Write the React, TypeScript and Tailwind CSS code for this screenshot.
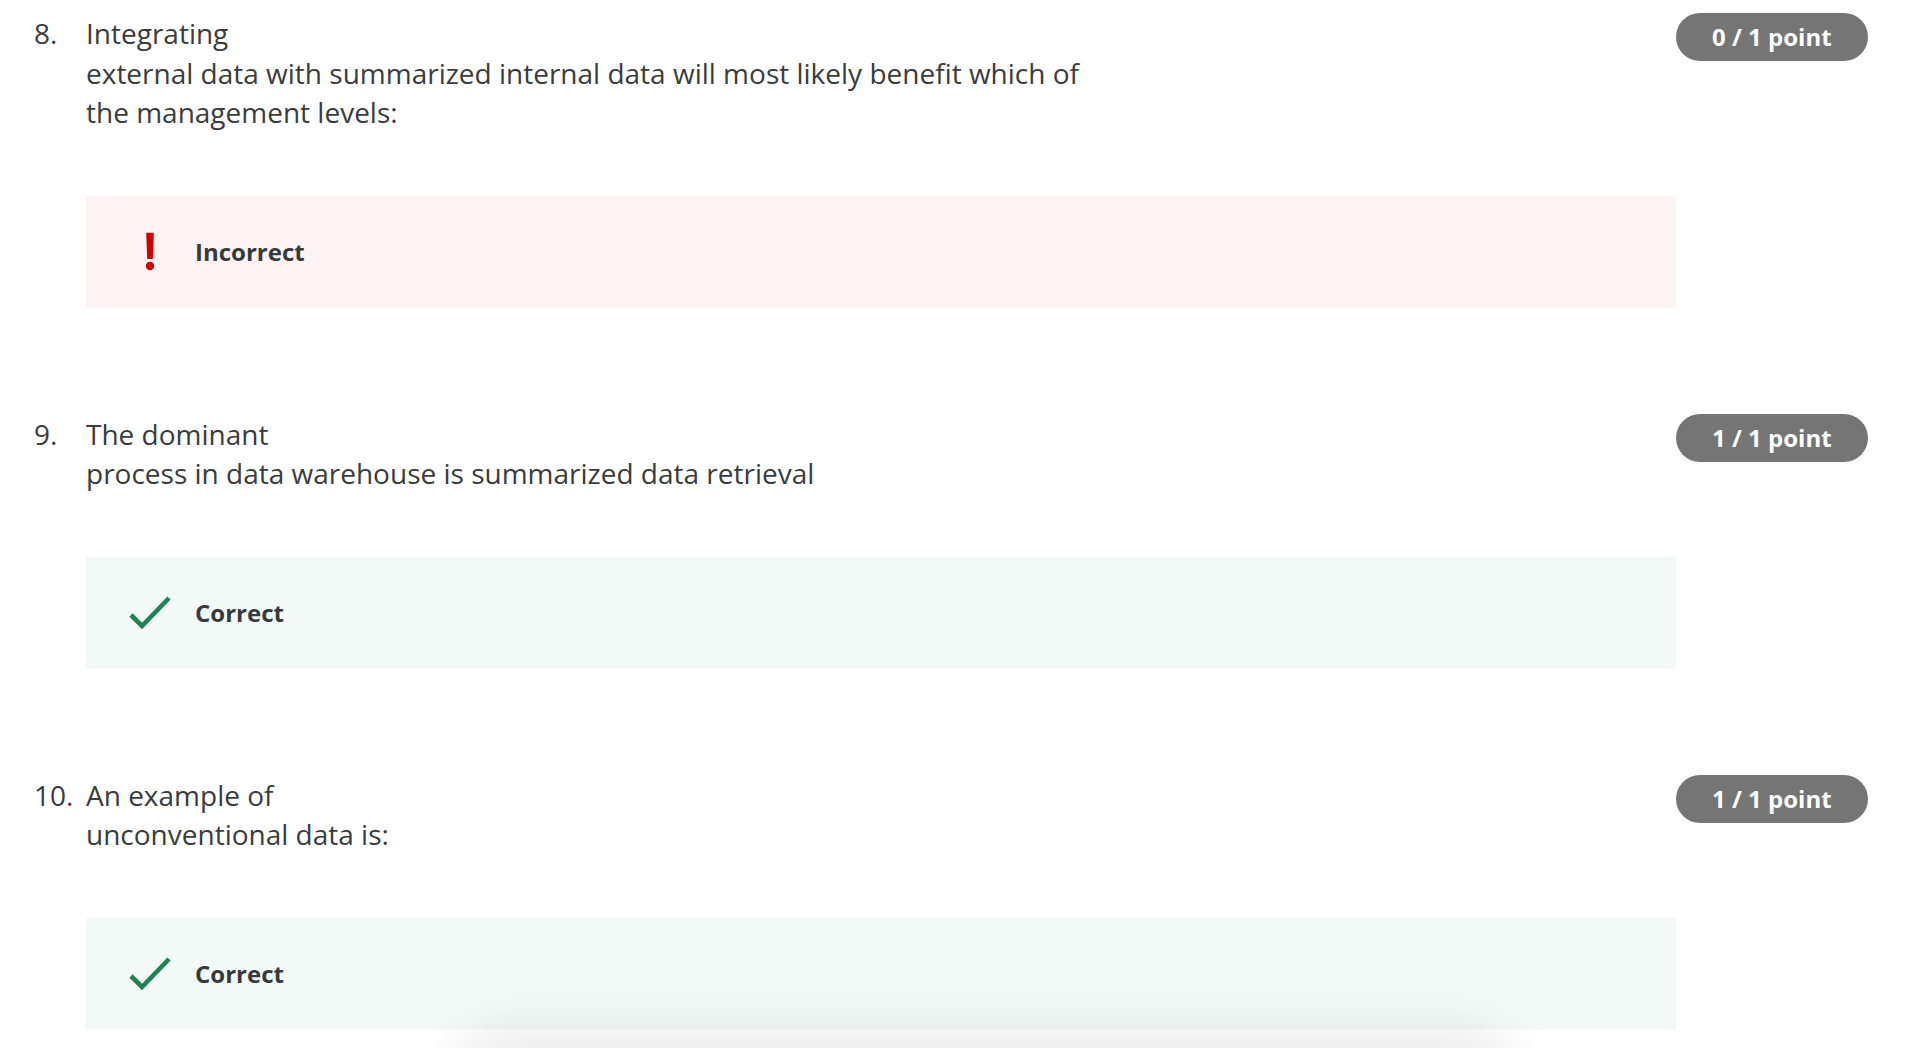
const questions = [
  {
    num: "8.",
    lines: [
      "Integrating",
      "external data with summarized internal data will most likely benefit which of",
      "the management levels:",
    ],
    score: "0 / 1 point",
    correct: false,
  },
  {
    num: "9.",
    lines: ["The dominant", "process in data warehouse is summarized data retrieval"],
    score: "1 / 1 point",
    correct: true,
  },
  {
    num: "10.",
    lines: ["An example of", "unconventional data is:"],
    score: "1 / 1 point",
    correct: true,
  },
];

function Bang() {
  return (
    <svg width="44" height="40" viewBox="0 0 44 40" aria-hidden="true">
      <path d="M18.2 1.2 Q18 0.7 18.6 0.7 L25.4 0.7 Q26 0.7 25.8 1.2 L24.8 27 L19.2 27 Z" fill="#d30001" />
      <circle cx="22" cy="34" r="4.2" fill="#d30001" />
    </svg>
  );
}

function Check() {
  return (
    <svg width="44" height="40" viewBox="0 0 44 40" aria-hidden="true">
      <polyline points="3,22 14,33 41,5" fill="none" stroke="#1f8354" strokeWidth="4.6" />
    </svg>
  );
}

export default function App() {
  return (
    <div
      className="relative h-[1048px] w-full overflow-hidden bg-white pt-[14px] text-[#3a3c3e]"
      style={{ fontFamily: '"Open Sans", "Noto Sans", sans-serif' }}
    >
      <div className="flex flex-col gap-[107px]">
        {questions.map((q) => (
          <div key={q.num} className="flex pl-[34px] pr-[63px]">
            <div className="w-[52px] shrink-0 text-[28px] leading-[39.5px]">{q.num}</div>
            <div className="w-[1590px] shrink-0">
              <div className="text-[28px] leading-[39.5px]">
                {q.lines.map((l) => (
                  <div key={l} className="whitespace-nowrap">
                    {l}
                  </div>
                ))}
              </div>
              <div
                className={
                  q.correct
                    ? "mt-[63px] flex h-[112px] items-center bg-[#f3f9f7] pl-[42px]"
                    : "mt-[63px] flex h-[112px] items-center bg-[#fdf3f4] pl-[42px]"
                }
              >
                <div className="flex w-[44px] justify-center">{q.correct ? <Check /> : <Bang />}</div>
                <span className="ml-[23px] text-[24px] font-bold leading-none text-[#373a3c]">
                  {q.correct ? "Correct" : "Incorrect"}
                </span>
              </div>
            </div>
            <div className="-mt-[1px] flex h-[48px] shrink-0 items-center rounded-full bg-[#757575] px-[36px] text-[24px] font-bold whitespace-nowrap text-white">
              {q.score}
            </div>
          </div>
        ))}
      </div>
      <div className="pointer-events-none absolute left-[470px] top-[1050px] h-[80px] w-[1030px] rounded-[40px] shadow-[0_0_50px_22px_rgba(0,0,0,0.08)]" />
    </div>
  );
}
